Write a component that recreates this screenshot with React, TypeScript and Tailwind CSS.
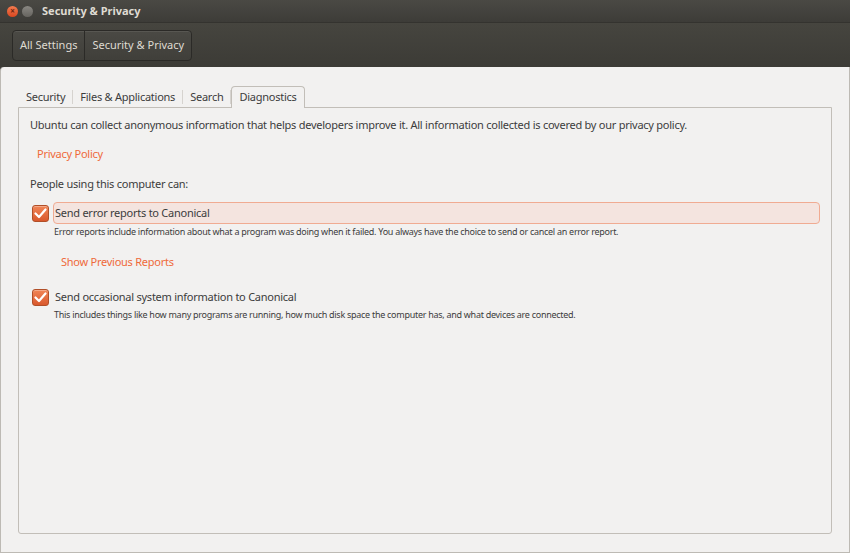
import * as React from "react"

const font = { fontFamily: "'Noto Sans', 'DejaVu Sans', sans-serif" }

function Check() {
  return (
    <div className="flex h-[17px] w-[17px] shrink-0 items-center justify-center rounded-[3px] border border-[#b14f28] bg-gradient-to-b from-[#f08556] to-[#d9582c] shadow-[inset_0_1px_0_rgba(255,255,255,0.3)]">
      <svg width="13" height="11" viewBox="0 0 13 11">
        <path d="M1.5 5.5 L5 9 L11.5 1.5" fill="none" stroke="#fff" strokeWidth="2.2" strokeLinecap="round" strokeLinejoin="round" />
      </svg>
    </div>
  )
}

export default function App() {
  const tabs = ["Security", "Files & Applications", "Search"]

  return (
    <div className="flex h-[553px] w-[850px] flex-col overflow-hidden bg-[#3c3b37]" style={font}>
      {/* title bar */}
      <div className="flex h-[22px] items-center bg-gradient-to-b from-[#4a4944] to-[#3d3c38] pl-[7px]">
        <div className="flex h-[11px] w-[11px] items-center justify-center rounded-full bg-gradient-to-b from-[#f37b4e] to-[#d9461f]">
          <span className="text-[8px] font-bold leading-none text-[#6b2410]">×</span>
        </div>
        <div className="ml-[4px] h-[11px] w-[11px] rounded-full bg-gradient-to-b from-[#8a8883] to-[#66645f]" />
        <span className="ml-[9px] text-[11px] font-bold text-[#dfdbd2]">Security &amp; Privacy</span>
      </div>

      {/* toolbar */}
      <div className="flex h-[45px] items-center border-t border-[#34332f] bg-gradient-to-b from-[#46453f] to-[#3c3b36] px-[12px]">
        <div className="flex h-[31px] overflow-hidden rounded-[4px] border border-[#2b2a27] bg-gradient-to-b from-[#4a4944] to-[#403f3a] shadow-[inset_0_1px_0_rgba(255,255,255,0.08)]">
          <div className="flex items-center border-r border-[#2b2a27] px-[7px] text-[11px] text-[#dfdbd2]">All Settings</div>
          <div className="flex items-center px-[7px] text-[11px] text-[#dfdbd2]">Security &amp; Privacy</div>
        </div>
      </div>

      {/* content */}
      <div className="flex flex-1 flex-col rounded-tl-[4px] border-x border-b border-[#bdbab4] bg-[#f2f1f0] px-[17px] pt-[18px] pb-[18px] text-[11px] tracking-[-0.25px] text-[#3c3c3c]">
        {/* tabs */}
        <div className="flex h-[22px] items-end pl-[1px]">
          {tabs.map((t) => (
            <div key={t} className="flex h-[20px] items-center">
              <span className="px-[7px]">{t}</span>
              <span className="h-[14px] w-px bg-[#d6d3cf]" />
            </div>
          ))}
          <div className="relative -mb-px flex h-[22px] items-center rounded-t-[4px] border border-b-0 border-[#c2beb8] bg-[#f2f1f0] px-[7px]">
            Diagnostics
          </div>
        </div>

        {/* panel */}
        <div className="flex flex-1 flex-col rounded-b-[3px] border border-[#c2beb8] px-[11px] pt-[8px]">
          <p className="leading-[17px]">
            Ubuntu can collect anonymous information that helps developers improve it. All information collected is covered by our privacy policy.
          </p>
          <div className="mt-[12px] pl-[7px] leading-[17px] text-[#ef6a3a]">Privacy Policy</div>
          <div className="mt-[13px] leading-[17px]">People using this computer can:</div>

          <div className="mt-[10px] flex items-center gap-[4px] pl-[2px]">
            <Check />
            <div className="flex h-[22px] flex-1 items-center rounded-[4px] border border-[#f0ab92] bg-[#f4e4df] pl-[1px]">
              Send error reports to Canonical
            </div>
          </div>
          <div className="mt-[1px] pl-[24px] text-[9px] leading-[13px] tracking-[-0.28px]">
            Error reports include information about what a program was doing when it failed. You always have the choice to send or cancel an error report.
          </div>
          <div className="mt-[15px] pl-[31px] leading-[17px] text-[#ef6a3a]">Show Previous Reports</div>

          <div className="mt-[16px] flex items-center gap-[6px] pl-[2px]">
            <Check />
            <span className="leading-[22px]">Send occasional system information to Canonical</span>
          </div>
          <div className="mt-0 pl-[24px] text-[9px] leading-[13px] tracking-[-0.28px]">
            This includes things like how many programs are running, how much disk space the computer has, and what devices are connected.
          </div>
        </div>
      </div>
    </div>
  )
}
